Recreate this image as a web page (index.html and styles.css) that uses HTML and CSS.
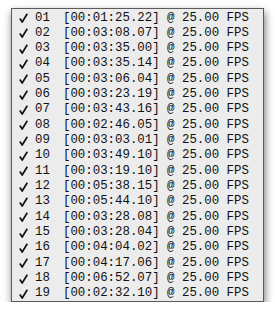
FILE: index.html
```html
<!DOCTYPE html>
<html>
<head>
<meta charset="utf-8">
<link rel="stylesheet" href="styles.css">
</head>
<body>
<div class="panel">
  <ul class="list">
    <li class="row"><svg class="check" viewBox="0 0 9 10" width="9" height="10"><path d="M0.8 5.6 L3.2 9 L8.3 0.8"/></svg><span class="num">01</span><span class="txt">[00:01:25.22] @ 25.00 FPS</span></li>
    <li class="row"><svg class="check" viewBox="0 0 9 10" width="9" height="10"><path d="M0.8 5.6 L3.2 9 L8.3 0.8"/></svg><span class="num">02</span><span class="txt">[00:03:08.07] @ 25.00 FPS</span></li>
    <li class="row"><svg class="check" viewBox="0 0 9 10" width="9" height="10"><path d="M0.8 5.6 L3.2 9 L8.3 0.8"/></svg><span class="num">03</span><span class="txt">[00:03:35.00] @ 25.00 FPS</span></li>
    <li class="row"><svg class="check" viewBox="0 0 9 10" width="9" height="10"><path d="M0.8 5.6 L3.2 9 L8.3 0.8"/></svg><span class="num">04</span><span class="txt">[00:03:35.14] @ 25.00 FPS</span></li>
    <li class="row"><svg class="check" viewBox="0 0 9 10" width="9" height="10"><path d="M0.8 5.6 L3.2 9 L8.3 0.8"/></svg><span class="num">05</span><span class="txt">[00:03:06.04] @ 25.00 FPS</span></li>
    <li class="row"><svg class="check" viewBox="0 0 9 10" width="9" height="10"><path d="M0.8 5.6 L3.2 9 L8.3 0.8"/></svg><span class="num">06</span><span class="txt">[00:03:23.19] @ 25.00 FPS</span></li>
    <li class="row"><svg class="check" viewBox="0 0 9 10" width="9" height="10"><path d="M0.8 5.6 L3.2 9 L8.3 0.8"/></svg><span class="num">07</span><span class="txt">[00:03:43.16] @ 25.00 FPS</span></li>
    <li class="row"><svg class="check" viewBox="0 0 9 10" width="9" height="10"><path d="M0.8 5.6 L3.2 9 L8.3 0.8"/></svg><span class="num">08</span><span class="txt">[00:02:46.05] @ 25.00 FPS</span></li>
    <li class="row"><svg class="check" viewBox="0 0 9 10" width="9" height="10"><path d="M0.8 5.6 L3.2 9 L8.3 0.8"/></svg><span class="num">09</span><span class="txt">[00:03:03.01] @ 25.00 FPS</span></li>
    <li class="row"><svg class="check" viewBox="0 0 9 10" width="9" height="10"><path d="M0.8 5.6 L3.2 9 L8.3 0.8"/></svg><span class="num">10</span><span class="txt">[00:03:49.10] @ 25.00 FPS</span></li>
    <li class="row"><svg class="check" viewBox="0 0 9 10" width="9" height="10"><path d="M0.8 5.6 L3.2 9 L8.3 0.8"/></svg><span class="num">11</span><span class="txt">[00:03:19.10] @ 25.00 FPS</span></li>
    <li class="row"><svg class="check" viewBox="0 0 9 10" width="9" height="10"><path d="M0.8 5.6 L3.2 9 L8.3 0.8"/></svg><span class="num">12</span><span class="txt">[00:05:38.15] @ 25.00 FPS</span></li>
    <li class="row"><svg class="check" viewBox="0 0 9 10" width="9" height="10"><path d="M0.8 5.6 L3.2 9 L8.3 0.8"/></svg><span class="num">13</span><span class="txt">[00:05:44.10] @ 25.00 FPS</span></li>
    <li class="row"><svg class="check" viewBox="0 0 9 10" width="9" height="10"><path d="M0.8 5.6 L3.2 9 L8.3 0.8"/></svg><span class="num">14</span><span class="txt">[00:03:28.08] @ 25.00 FPS</span></li>
    <li class="row"><svg class="check" viewBox="0 0 9 10" width="9" height="10"><path d="M0.8 5.6 L3.2 9 L8.3 0.8"/></svg><span class="num">15</span><span class="txt">[00:03:28.04] @ 25.00 FPS</span></li>
    <li class="row"><svg class="check" viewBox="0 0 9 10" width="9" height="10"><path d="M0.8 5.6 L3.2 9 L8.3 0.8"/></svg><span class="num">16</span><span class="txt">[00:04:04.02] @ 25.00 FPS</span></li>
    <li class="row"><svg class="check" viewBox="0 0 9 10" width="9" height="10"><path d="M0.8 5.6 L3.2 9 L8.3 0.8"/></svg><span class="num">17</span><span class="txt">[00:04:17.06] @ 25.00 FPS</span></li>
    <li class="row"><svg class="check" viewBox="0 0 9 10" width="9" height="10"><path d="M0.8 5.6 L3.2 9 L8.3 0.8"/></svg><span class="num">18</span><span class="txt">[00:06:52.07] @ 25.00 FPS</span></li>
    <li class="row"><svg class="check" viewBox="0 0 9 10" width="9" height="10"><path d="M0.8 5.6 L3.2 9 L8.3 0.8"/></svg><span class="num">19</span><span class="txt">[00:02:32.10] @ 25.00 FPS</span></li>
  </ul>
</div>
</body>
</html>
```

FILE: styles.css
```css
html, body {
  margin: 0;
  padding: 0;
  background: #ffffff;
}
.panel {
  margin: 8px 0 0 11px;
  width: 251px;
  height: 292px;
  border: 1px solid #5a5a5a;
  background: #ececec;
  box-shadow: 1px 4px 8px rgba(0, 0, 0, 0.55);
  overflow: hidden;
}
.list {
  list-style: none;
  margin: 0;
  padding: 1.5px 0 0 0;
}
.row {
  display: flex;
  align-items: center;
  height: 15.33px;
  font-family: "Liberation Mono", "DejaVu Sans Mono", monospace;
  font-size: 12.4px;
  line-height: 15.33px;
  color: #111;
  white-space: pre;
}
.check {
  margin-left: 7px;
  flex: none;
}
.check path {
  fill: none;
  stroke: #111;
  stroke-width: 1.7;
  stroke-linejoin: round;
}
.num {
  margin-left: 7px;
  width: 28px;
}
```
